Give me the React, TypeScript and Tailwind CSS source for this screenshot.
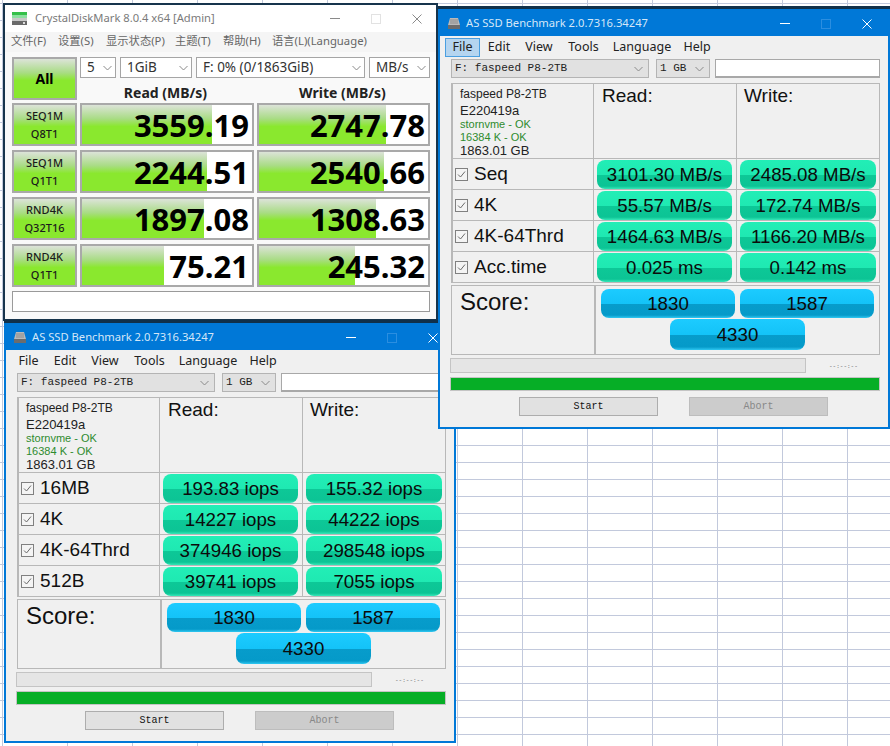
import React from "react";

const sans = "font-['Noto_Sans','Noto_Sans_CJK_SC',sans-serif]";
const arial = "font-['Liberation_Sans',sans-serif]";
const mono = "font-['Liberation_Mono',monospace]";

function Chevron({ className = "" }: { className?: string }) {
  return (
    <svg width="9" height="6" viewBox="0 0 9 6" className={className}>
      <path d="M0.5 1 L4.5 5 L8.5 1" fill="none" stroke="#8a8a8a" strokeWidth="1" />
    </svg>
  );
}

function DriveIcon() {
  return (
    <svg width="14" height="13" viewBox="0 0 14 13" className="shrink-0">
      <path d="M3 1 H11 L13 8 H1 Z" fill="#b9b9b9" />
      <path d="M4 2 V7 M6 2 V7 M8 2 V7 M10 2 V7" stroke="#8c8c8c" strokeWidth="1" />
      <rect x="1" y="8" width="12" height="4" fill="#6c6c6c" />
    </svg>
  );
}

function WinButtons({ dark }: { dark?: boolean }) {
  const c = dark ? "#8a8a8a" : "#ffffff";
  return (
    <div className="ml-auto flex items-center">
      <svg width="10" height="2" viewBox="0 0 10 2" className="mr-[31px]">
        <rect width="10" height="1" fill={c} />
      </svg>
      <svg width="10" height="10" viewBox="0 0 10 10" className="mr-[31px]">
        <rect x="0.5" y="0.5" width="9" height="9" fill="none" stroke={dark ? "#e2e2e2" : "#2b8ee0"} />
      </svg>
      <svg width="10" height="10" viewBox="0 0 10 10">
        <path d="M0.5 0.5 L9.5 9.5 M9.5 0.5 L0.5 9.5" stroke={c} strokeWidth="1" />
      </svg>
    </div>
  );
}

function CheckBox() {
  return (
    <svg width="13" height="13" viewBox="0 0 13 13" className="shrink-0">
      <rect x="0.5" y="0.5" width="12" height="12" fill="#f4f4f4" stroke="#808080" />
      <path d="M3 6.5 L5.5 9 L10 3.5" fill="none" stroke="#6a6a6a" strokeWidth="1" />
    </svg>
  );
}

function Pill({ children, blue, w = "w-full", h = "h-[29px]" }: { children: React.ReactNode; blue?: boolean; w?: string; h?: string }) {
  return (
    <div
      className={`${w} ${h} flex items-center justify-center rounded-[8px] pt-[2px] ${arial} text-[18.7px] text-[#0b0b0b] ${
        blue
          ? "bg-[linear-gradient(#1ccbff_0%,#14c3f8_50%,#079ccb_52%,#059ac9_90%,#2fc8f2_100%)]"
          : "bg-[linear-gradient(#22eeb6_0%,#1fe9b2_50%,#0dc897_52%,#0cc495_90%,#35e8b8_100%)]"
      }`}
    >
      {children}
    </div>
  );
}

type Row = { label: string; read: string; write: string };

function AsSsd({ rows, active, className }: { rows: Row[]; active?: boolean; className: string }) {
  const menu = [
    ["File", "w-[35px]"],
    ["Edit", "w-[38px]"],
    ["View", "w-[42px]"],
    ["Tools", "w-[47px]"],
    ["Language", "w-[70px]"],
    ["Help", "w-[40px]"],
  ];
  return (
    <div className={`absolute flex w-[452px] h-[420px] flex-col border-2 border-[#0078d7] bg-[#f0f0f0] shadow-[0_-3px_0_#10304a] ${className}`}>
      <div className={`flex h-[25px] shrink-0 items-center bg-[#0078d7] pl-[7px] pr-[16px] ${sans} text-[11.2px] text-[#d5e7f7]`}>
        <DriveIcon />
        <span className="ml-[5px] whitespace-nowrap">AS SSD Benchmark 2.0.7316.34247</span>
        <WinButtons />
      </div>
      <div className={`flex h-[22px] shrink-0 items-center pl-[5px] ${sans} text-[12.5px] text-[#222]`}>
        {menu.map(([m, w], i) => (
          <div
            key={m}
            className={`${w} flex h-[19px] items-center justify-center pt-[1px] ${
              i === 0 && active ? "border border-[#4a9fe0] bg-[#b5d5f0]" : ""
            }`}
          >
            {m}
          </div>
        ))}
      </div>
      <div className={`mt-[1px] flex h-[19px] shrink-0 pl-[11px] ${mono} text-[11px] text-[#222]`}>
        <div className="flex w-[198px] items-center justify-between border border-[#b4b4b4] bg-[#e1e1e1] pl-[3px] pr-[5px]">
          <span>F: faspeed P8-2TB</span>
          <Chevron />
        </div>
        <div className="ml-[7px] flex w-[54px] items-center justify-between border border-[#b4b4b4] bg-[#e1e1e1] pl-[3px] pr-[5px]">
          <span>1 GB</span>
          <Chevron />
        </div>
        <div className="ml-[5px] w-[165px] border border-[#a8a8a8] border-b-2 bg-white" />
      </div>

      <div className="ml-[11px] mt-[5px] w-[429px] shrink-0 border-l-2 border-r border-t border-[#b8b8b8]">
        <div className="grid h-[75px] grid-cols-[141px_143px_1fr] border-b border-[#b8b8b8]">
          <div className={`border-r border-[#b8b8b8] pl-[7px] pt-[2px] ${arial} text-[#222]`}>
            <div className="text-[12px] leading-[17px]">faspeed P8-2TB</div>
            <div className="text-[13px] leading-[15px]">E220419a</div>
            <div className="text-[11px] leading-[13px] text-[#2e8b2e]">stornvme - OK</div>
            <div className="text-[11px] leading-[13px] text-[#2e8b2e]">16384 K - OK</div>
            <div className="text-[13px] leading-[13px]">1863.01 GB</div>
          </div>
          <div className={`border-r border-[#b8b8b8] pl-[8px] ${arial} text-[19px] leading-[23px] text-[#111]`}>Read:</div>
          <div className={`pl-[7px] ${arial} text-[19px] leading-[23px] text-[#111]`}>Write:</div>
        </div>
        {rows.map((r) => (
          <div key={r.label} className="grid h-[31px] grid-cols-[141px_143px_1fr] border-b border-[#b8b8b8]">
            <div className={`flex items-center border-r border-[#b8b8b8] pl-[2px] pt-[1px] ${arial} text-[19px] text-[#111]`}>
              <CheckBox />
              <span className="ml-[6px] whitespace-nowrap">{r.label}</span>
            </div>
            <div className="flex items-center justify-center border-r border-[#b8b8b8] pl-[3px] pr-[4px] pt-[1px]">
              <Pill>{r.read}</Pill>
            </div>
            <div className="flex items-center justify-center px-[3px] pt-[1px]">
              <Pill>{r.write}</Pill>
            </div>
          </div>
        ))}
      </div>

      <div className="ml-[11px] mt-[2px] grid h-[70px] w-[429px] shrink-0 grid-cols-[144px_1fr] border border-[#b8b8b8]">
        <div className={`border-r-2 border-[#b8b8b8] pl-[8px] pt-[1px] ${arial} text-[24px] leading-[30px] text-[#111]`}>Score:</div>
        <div className="flex flex-col items-center px-[5px] pt-[3px]">
          <div className="flex w-full gap-[5px]">
            <Pill blue>1830</Pill>
            <Pill blue>1587</Pill>
          </div>
          <div className="mt-[1px]">
            <Pill blue w="w-[135px]" h="h-[31px]">4330</Pill>
          </div>
        </div>
      </div>

      <div className="ml-[10px] mt-[3px] flex h-[15px] shrink-0 items-center">
        <div className="h-full w-[356px] border border-[#c4c4c4] bg-[#e5e5e5]" />
        <span className={`ml-[23px] mt-[2px] ${mono} text-[6px] text-[#555]`}>--:--:--</span>
      </div>
      <div className="ml-[10px] mt-[4px] h-[14px] w-[430px] shrink-0 border border-[#c4c4c4] bg-[#06ae26]" />
      <div className={`ml-[79px] mt-[6px] flex shrink-0 gap-[31px] ${mono} text-[10px]`}>
        <div className="flex h-[19px] w-[139px] items-center justify-center border border-[#adadad] bg-[#e1e1e1] text-[#111]">Start</div>
        <div className="flex h-[19px] w-[139px] items-center justify-center border border-[#bdbdbd] bg-[#cccccc] text-[#888]">Abort</div>
      </div>
    </div>
  );
}

function Selector({ w, children, ml }: { w: string; children: string; ml: string }) {
  return (
    <div className={`${w} ${ml} flex h-[21px] items-center justify-between border border-[#a5a5a5] bg-white pl-[6px] pr-[3px] ${sans} text-[13.5px] text-[#333]`}>
      <span className="whitespace-nowrap">{children}</span>
      <Chevron />
    </div>
  );
}

const green = "bg-[linear-gradient(#dce3d8_0%,#a9dc85_35%,#8ae82e_55%,#8ae82e_100%)]";

function Cell({ value, fill }: { value: string; fill: number }) {
  return (
    <div className="relative flex h-[43px] items-center justify-end overflow-hidden border-2 border-[#a9a9a9] bg-white pr-[3px]">
      <div className={`absolute inset-y-0 left-0 ${green}`} style={{ width: fill }} />
      <span className={`relative pt-[1px] ${sans} text-[31px] font-bold leading-none text-black`}>{value}</span>
    </div>
  );
}

function Crystal() {
  const rows = [
    ["SEQ1M", "Q8T1", "3559.19", 130, "2747.78", 127],
    ["SEQ1M", "Q1T1", "2244.51", 125, "2540.66", 125],
    ["RND4K", "Q32T16", "1897.08", 122, "1308.63", 117],
    ["RND4K", "Q1T1", "75.21", 82, "245.32", 96],
  ] as const;
  const menu = [
    ["文件(F)", "w-[47px]"],
    ["设置(S)", "w-[48px]"],
    ["显示状态(P)", "w-[69px]"],
    ["主题(T)", "w-[48px]"],
    ["帮助(H)", "w-[49px]"],
    ["语言(L)(Language)", "w-[100px]"],
  ];
  return (
    <div className="absolute left-[3px] top-[3px] flex h-[318px] w-[435px] flex-col border-2 border-[#17344c] bg-white">
      <div className={`flex h-[27px] shrink-0 items-center pl-[7px] pr-[14px] ${sans} text-[11.2px] text-[#7a7a7a]`}>
        <svg width="15" height="15" viewBox="0 0 15 15" className="shrink-0">
          <rect x="0" y="1" width="15" height="3" fill="#35c04a" />
          <rect x="0" y="4" width="15" height="3" fill="#8ce0a0" />
          <rect x="0" y="7" width="15" height="3" fill="#c9c9c9" />
          <rect x="0" y="10" width="15" height="4" fill="#6a6a6a" />
          <rect x="11" y="11" width="2" height="2" fill="#ddd" />
        </svg>
        <span className="ml-[8px] whitespace-nowrap">CrystalDiskMark 8.0.4 x64 [Admin]</span>
        <WinButtons dark />
      </div>
      <div className={`flex h-[20px] shrink-0 items-start bg-[#f5f5f5] pl-[6px] ${sans} text-[11.3px] leading-[18px] text-[#666]`}>
        {menu.map(([m, w]) => (
          <span key={m} className={`${w} whitespace-nowrap`}>{m}</span>
        ))}
      </div>
      <div className="flex flex-1 flex-col bg-[#f9f9f9] px-[7px] pt-[5px]">
        <div className="flex h-[46px]">
          <div className={`flex h-[43px] w-[65px] shrink-0 items-center justify-center border-2 border-[#a9a9a9] ${green} ${sans} text-[14px] font-bold text-black`}>
            All
          </div>
          <div className="ml-[3px] flex-1">
            <div className="flex">
              <Selector w="w-[36px]" ml="">5</Selector>
              <Selector w="w-[72px]" ml="ml-[4px]">1GiB</Selector>
              <Selector w="w-[169px]" ml="ml-[4px]">F: 0% (0/1863GiB)</Selector>
              <Selector w="w-[61px]" ml="ml-[4px]">MB/s</Selector>
            </div>
            <div className={`mt-[5px] grid grid-cols-2 ${sans} text-[14px] font-bold leading-[20px] text-[#222]`}>
              <div className="pr-[4px] text-center">Read (MB/s)</div>
              <div className="text-center">Write (MB/s)</div>
            </div>
          </div>
        </div>
        <div className="flex flex-col gap-[4px]">
          {rows.map((r) => (
            <div key={r[0] + r[1]} className="grid grid-cols-[65px_174px_173px] gap-x-[3px]">
              <div className={`flex h-[43px] flex-col items-center justify-center border-2 border-[#a9a9a9] ${green} ${sans} text-[11px] font-medium leading-[18px] text-[#1b1b1b]`}>
                <span>{r[0]}</span>
                <span>{r[1]}</span>
              </div>
              <Cell value={r[2]} fill={r[3]} />
              <Cell value={r[4]} fill={r[5]} />
            </div>
          ))}
        </div>
        <div className="mt-[4px] h-[21px] w-[418px] border border-[#9a9a9a] bg-white" />
      </div>
    </div>
  );
}

const iops: Row[] = [
  { label: "16MB", read: "193.83 iops", write: "155.32 iops" },
  { label: "4K", read: "14227 iops", write: "44222 iops" },
  { label: "4K-64Thrd", read: "374946 iops", write: "298548 iops" },
  { label: "512B", read: "39741 iops", write: "7055 iops" },
];
const mbs: Row[] = [
  { label: "Seq", read: "3101.30 MB/s", write: "2485.08 MB/s" },
  { label: "4K", read: "55.57 MB/s", write: "172.74 MB/s" },
  { label: "4K-64Thrd", read: "1464.63 MB/s", write: "1166.20 MB/s" },
  { label: "Acc.time", read: "0.025 ms", write: "0.142 ms" },
];

export default function App() {
  return (
    <div className="relative h-[746px] w-[890px] overflow-hidden bg-white">
      <div className="absolute inset-0 bg-[linear-gradient(90deg,#c2c9dc_1px,transparent_1px),linear-gradient(#c2c9dc_1px,transparent_1px)] bg-[size:65px_17px] bg-[position:2px_3px]" />
      <Crystal />
      <AsSsd rows={iops} className="left-[4px] top-[323px]" />
      <AsSsd rows={mbs} active className="left-[438px] top-[9px]" />
    </div>
  );
}
